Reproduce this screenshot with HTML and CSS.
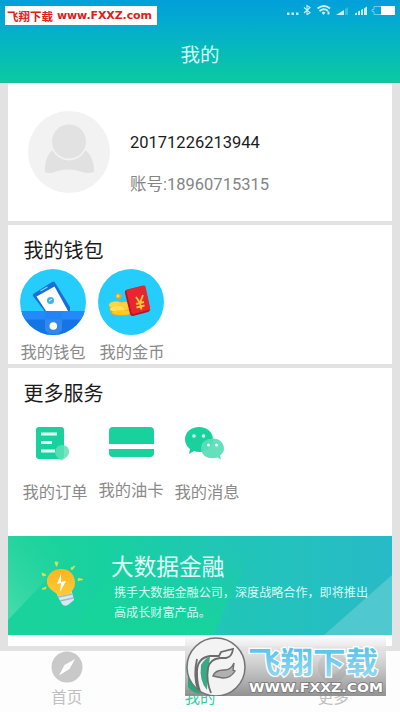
FILE: index.html
```html
<!DOCTYPE html>
<html lang="zh-CN">
<head>
<meta charset="utf-8">
<meta name="viewport" content="width=device-width, initial-scale=1">
<title>我的</title>
<link rel="stylesheet" href="styles.css">
</head>
<body>
<div class="app">
  <header class="header">
    <div class="statusbar">
      <svg width="112" height="14" viewBox="0 0 112 14" fill="#c8edf8">
        <path d="M2 11.500h2.500v2.500H2zM6.500 11.500h2.500v2.500h-2.500zM11 11.500h2.500v2.500H11z"/>
        <path d="M19 6.500l6 5.200-3 2V4.500l3 2-6 5.500" fill="none" stroke="#c8edf8" stroke-width="1.100"/>
        <path d="M32.500 7.500q6.500-5 12.500 0M34.500 10q4.500-3.500 8.500 0" fill="none" stroke="#c8edf8" stroke-width="1.800"/>
        <path d="M36.500 11.500q2-1.500 4 0l-2 2.500zM42.500 10.500h2v3h-2z"/>
        <path d="M51 14l8-5v5z"/><path d="M60 8l3-2v8h-3z" opacity=".3"/>
        <path d="M70 14v-1.500l2-1v2.500zM73 14v-3.500l2-1v4.500zM76 14v-5l2-1.200V14zM79 14V7.500l3-2V14z"/>
        <path d="M87 8.500h2V5.500h8v8h-8v-3h-2z" fill="none" stroke="#8bd4ee" stroke-width=".8"/>
        <path d="M96 5h14v9H96z" fill="#fff"/>
      </svg>
    </div>
    <h1 class="title">我的</h1>
    <div class="badge"><span class="badge-cn">飞翔下载</span><span class="badge-url">www.FXXZ.com</span></div>
  </header>

  <main class="content">
    <section class="card profile">
      <svg class="avatar" width="82" height="82" viewBox="0 0 82 82">
        <circle cx="41" cy="41" r="41" fill="#f2f2f2"/>
        <path d="M25 39C19 43 16.500 52 17 61q6 2 11-.5 13-4 26 .5 6 2 12 0c.5-9-3-18-9-22z" fill="#e1e1e1"/>
        <circle cx="41" cy="31" r="18.500" fill="#f2f2f2"/>
        <circle cx="41" cy="30.500" r="17" fill="#e2e2e2"/>
      </svg>
      <div class="identity">
        <div class="name">20171226213944</div>
        <div class="account">账号:18960715315</div>
      </div>
    </section>

    <section class="card wallet">
      <h2>我的钱包</h2>
      <div class="items">
        <div class="item">
          <svg width="66" height="66" viewBox="0 0 66 66">
            <clipPath id="disc"><circle cx="33" cy="33" r="33"/></clipPath>
            <g clip-path="url(#disc)">
              <path d="M0 0h66v66H0z" fill="#25cdfd"/>
              <path d="M14 24.500L32 13q2-1 3 .5L50 38v6H26L13 27q-1-1.500 1-2.500z" fill="#176fd8"/>
              <path d="M16.500 27.500L34.500 17.500 48 42H26z" fill="#fff"/>
              <path d="M20.500 22l7-4" stroke="#8dcaff" stroke-width="1.300"/>
              <circle cx="30.500" cy="31.500" r="3.500" fill="#35b9e2"/><path d="M29 32l3-2" stroke="#fff"/>
              <path d="M0 42h66v24H0z" fill="#1675e5"/><path d="M0 42h66v8.500H0z" fill="#2489fb"/>
              <path d="M25 42h17v17q0 6-8.500 6T25 59z" fill="#3289ed"/>
              <path d="M25 42h17v8.500H25z" fill="#2384f5"/>
              <circle cx="33.300" cy="57" r="3.800" fill="#fff"/>
            </g>
          </svg>
          <span>我的钱包</span>
        </div>
        <div class="item coin">
          <svg width="66" height="66" viewBox="0 0 66 66">
            <circle cx="33" cy="33" r="33" fill="#25cdfd"/>
            <path d="M11 38c0-8 10-6 13-5 5-2 12-1 12 3l-1 6q-3 5-11 5c-7 0-11-1-12-5z" fill="#e9a51a"/>
            <ellipse cx="18" cy="36" rx="7" ry="3.500" fill="#ffd640"/>
            <ellipse cx="27" cy="37" rx="8" ry="4" fill="#ffd13a"/>
            <ellipse cx="19" cy="40" rx="7" ry="3" fill="#ffe45a"/>
            <ellipse cx="24" cy="43.500" rx="10" ry="2.500" fill="#ffc928"/>
            <circle cx="20.500" cy="27" r="3" fill="#dba73b"/><circle cx="20" cy="27" r="1.500" fill="#ffd85c"/>
            <path d="M28 21l16-4q2-.5 3 1l5 22q.5 2-2 3l-15 4q-2 .5-3-2l-5-21q-.5-2 1-3z" fill="#b51622"/>
            <path d="M29.500 20.500L45 16.500q2-.5 2.500 1l4.500 21q.5 2-1.500 2.500L36 45q-2 .5-2.500-1.500l-5-20.500q-.5-2 1-2.500z" fill="#e8262f"/>
            <path d="M38 28l4 6 3-8M42 34l1.500 6.500M38 35l8-2M38.500 38.500l8-2" fill="none" stroke="#ffcc32" stroke-width="1.900"/>
          </svg>
          <span>我的金币</span>
        </div>
      </div>
    </section>

    <section class="card services">
      <h2>更多服务</h2>
      <div class="service-list">
        <div class="service order">
          <svg width="34" height="34" viewBox="0 0 34 34">
            <rect width="28" height="32" rx="3" fill="#19d19d"/>
            <path d="M5 7h16M5 15.500h11M5 24h14" stroke="#e6fff7" stroke-width="3"/>
            <path d="M26 18c5 0 8 4 7 8q-1 4-7.500 7.500Q19 30 19 25q1-7 7-7z" fill="#5ee0b9" opacity=".85"/>
          </svg>
          <span>我的订单</span>
        </div>
        <div class="service oil">
          <svg width="45" height="30" viewBox="0 0 45 30" fill="#19d19d">
            <path d="M0 17V4q0-4 4-4h37q4 0 4 4v13zM0 22h45v4q0 4-4 4H4q-4 0-4-4z"/>
          </svg>
          <span>我的油卡</span>
        </div>
        <div class="service message">
          <svg width="39" height="33" viewBox="0 0 39 33">
            <path d="M14 0c8 0 14 5 14 12.500S22 25 14 25q-3 0-5-1l-5 3 1-5Q0 18 0 12.500C0 5 6 0 14 0z" fill="#19d19d"/>
            <path d="M28 11.500c6 0 11 4 11 10q0 4-4 7l1 4-4-2q-2 .8-5 .8c-6 0-11-4-11-10s5-9.800 12-9.800z" fill="#58dfb7" opacity=".93"/>
            <circle cx="9" cy="9" r="1.800" fill="#d9fff4"/><circle cx="18.500" cy="9" r="1.800" fill="#d9fff4"/>
            <circle cx="23.500" cy="18" r="1.500" fill="#efffff"/><circle cx="31.500" cy="18" r="1.500" fill="#efffff"/>
          </svg>
          <span>我的消息</span>
        </div>
      </div>
      <div class="banner">
        <svg class="facets" width="384" height="99" viewBox="0 0 384 99">
          <defs>
            <linearGradient id="base" x2="1"><stop offset=".1" stop-color="#19d29c"/><stop offset=".25" stop-color="#18d1a0"/><stop offset=".55" stop-color="#20c6b6"/><stop offset="1" stop-color="#28bac8"/></linearGradient>
            <linearGradient id="wedge" x1=".6" y1=".1" x2=".5" y2="1"><stop stop-color="#16d49a" stop-opacity="0"/><stop offset="1" stop-color="#16d49a"/></linearGradient>
            <linearGradient id="light" gradientUnits="userSpaceOnUse" x1="0" y1="70" x2="70" y2="10"><stop stop-color="#42dba9"/><stop offset="1" stop-color="#22d29e" stop-opacity="0"/></linearGradient>
          </defs>
          <path d="M0 0h384v99H0z" fill="url(#base)"/>
          <path d="M60 99L130 0h122L205 99z" fill="url(#wedge)"/>
          <path d="M0 0h80L0 84z" fill="url(#light)"/>
          <path d="M384 39v60h-68z" fill="#4fc8cf"/>
        </svg>
        <svg class="bulb" width="45" height="46" viewBox="0 0 45 46">
          <defs><linearGradient id="glow" x2="0" y2="1"><stop stop-color="#ffb51e"/><stop offset="1" stop-color="#ffca36"/></linearGradient></defs>
          <path d="M15 1l3 .3-1.500 4zM35 5l-3 4-1-2zM2 12l4 2-3 1zM43 18.500l-5 1 .5-2zM2 28l4-2-.5 2z" fill="#d6e34b" stroke="#d6e34b"/>
          <path d="M16 29l15-1 3 11-6 5q-4 2-6-1l-4-7z" fill="#d9e8f0"/>
          <path d="M18 36l15-3M20 40l13-3" stroke="#9dbccb" stroke-width="1.300"/>
          <path d="M21 8c9 0 14 6 14 14 0 7-5 8-4 11l-13 2c-1-4-10-6-11-13-1-8 6-14 14-14z" fill="url(#glow)"/>
          <path d="M21 13l-4 10 4-1-1 9 6-11-5 1z" fill="#fff"/>
        </svg>
        <div class="banner-text">
          <h3>大数据金融</h3>
          <p>携手大数据金融公司，深度战略合作，即将推出<br>高成长财富产品。</p>
        </div>
      </div>
    </section>
  </main>

  <nav class="tabs">
    <a class="tab">
      <svg width="32" height="32" viewBox="0 0 32 32"><circle cx="16" cy="16" r="15.500" fill="#c9c9c9"/><path d="M24 8l-5.500 10L8 24.500 13.500 14z" fill="#fff"/></svg>
      <span>首页</span>
    </a>
    <a class="tab active">
      <svg width="32" height="32" viewBox="0 0 32 32"><circle cx="16" cy="16" r="15" fill="#19d19d"/></svg>
      <span>我的</span>
    </a>
    <a class="tab">
      <svg width="32" height="32" viewBox="0 0 32 32"><circle cx="16" cy="16" r="15" fill="#b0b0b0"/><circle cx="16" cy="16" r="7" fill="#fff"/></svg>
      <span>更多</span>
    </a>
  </nav>

  <div class="watermark">
    <svg width="202" height="61" viewBox="0 0 202 61">
      <defs>
        <linearGradient id="plate" x2="0" y2="1"><stop stop-color="#fff" stop-opacity=".9"/><stop offset=".1" stop-color="#f0f0f0" stop-opacity=".85"/><stop offset=".5" stop-color="#c4c4c4" stop-opacity=".85"/><stop offset="1" stop-color="#8a8a8a" stop-opacity=".93"/></linearGradient>
        <linearGradient id="sky" x2="0" y2="1"><stop stop-color="#43bce9"/><stop offset="1" stop-color="#9edcf2"/></linearGradient>
      </defs>
      <path d="M0 0h201v61H0z" fill="url(#plate)"/>
      <path d="M3 40q5 13 14 19-9 0-14-7z" fill="#25a87e"/>
      <circle cx="31" cy="32" r="29" fill="#f3f3f3" stroke="#747474" stroke-width="1.500"/>
      <path d="M16 30q5-8 9-8l-2 15-1 18q-8-9-6-25z" fill="#39aa87"/>
      <path d="M12 24q-4 17 1 31M26 58q-5-12-3-25 2-9 12-10h6q6-1 7-9l-12 3-2 4h-9q-13 2-13 16 0 12 3 19" fill="none" stroke="#6c6c6c" stroke-width="1.800"/>
      <path d="M28 41q2-6 11-6 7 0 10-7l-1 7 2 1q-4 7-12 7-6-1-10-2z" fill="#b1b1b1" stroke="#707070" stroke-width="1.400"/>
      <g class="wm-text">
        <text class="wm-cn" x="63" y="38" textLength="130" lengthAdjust="spacingAndGlyphs">飞翔下载</text>
        <text class="wm-url" x="64" y="56.500" textLength="134" lengthAdjust="spacingAndGlyphs">WWW.FXXZ.COM</text>
      </g>
    </svg>
  </div>
</div>
</body>
</html>
```
FILE: styles.css
```css
* { box-sizing: border-box; }

body {
  margin: 0;
  font-family: Roboto, "Noto Sans CJK SC", sans-serif;
  background: #fdfdfd;
}

h1, h2, h3, p { margin: 0; font-weight: 400; }
svg { display: block; flex: none; }
span { white-space: nowrap; }

.app {
  position: relative;
  width: 400px;
  height: 712px;
  overflow: hidden;
  display: flex;
  flex-direction: column;
}

.header {
  position: relative;
  height: 83px;
  background: linear-gradient(#029fdb, #05b4c4 48%, #0bcaa2);
  border-bottom: 1px solid #20ba9d;
}

.statusbar {
  display: flex;
  justify-content: flex-end;
  height: 20px;
  padding: 1px 3px 0 0;
}

.title {
  text-align: center;
  font-size: 19.5px;
  line-height: 30px;
  padding-top: 21px;
  color: #d5fbf7;
}

.badge {
  position: absolute;
  left: 5px;
  top: 6px;
  width: 152px;
  height: 19px;
  padding-left: 2px;
  display: flex;
  align-items: center;
  background: #fff;
  color: #dc2118;
  font-weight: 700;
  white-space: nowrap;
}

.badge-cn { width: 50px; font-size: 11.5px; }
.badge-url { font: 700 11px "DejaVu Sans", sans-serif; letter-spacing: -.1px; }

.content {
  height: 568px;
  padding: 0 8px;
  background: #e2e2e2;
  display: flex;
  flex-direction: column;
  gap: 4px;
}

.card { background: #fff; }

.profile {
  height: 138px;
  display: flex;
  padding: 28px 0 0 20px;
}

.identity { padding: 20px 0 0 20px; }

.name {
  font-size: 16.5px;
  line-height: 24px;
  color: #1c1c1c;
}

.account {
  margin-top: 18px;
  font-size: 16.5px;
  line-height: 24px;
  color: #858585;
}

h2 {
  font-size: 20px;
  line-height: 30px;
  color: #1b1b1b;
  padding-left: 15.5px;
}

.wallet { height: 139px; padding-top: 11px; }

.items {
  display: flex;
  gap: 12px;
  padding: 3px 0 0 12px;
}

.item {
  width: 66px;
  display: flex;
  flex-direction: column;
  align-items: center;
}

.item span, .service span {
  font-size: 16.3px;
  line-height: 24px;
  color: #8a8a8a;
}

.item span { margin-top: 6px; }
.coin span { margin-left: 2px; }

.services { height: 278px; padding-top: 11px; }

.service-list {
  display: flex;
  gap: 10px;
  height: 127px;
  padding: 18px 0 0 14px;
}

.service {
  width: 66px;
  display: flex;
  flex-direction: column;
  align-items: center;
}

.order svg { margin-left: -4px; }
.order span { margin-top: 20px; }
.oil span { margin-top: 22px; }
.message svg { margin-left: -5px; }
.message span { margin-top: 21px; }

.banner {
  position: relative;
  height: 99px;
  display: flex;
}

.facets {
  position: absolute;
  left: 0;
  top: 0;
}

.bulb { position: relative; margin: 25px 0 0 32px; }
.banner-text { position: relative; padding: 16px 0 0 26px; }

h3 {
  font-size: 22.7px;
  line-height: 31px;
  color: #e1fff9;
}

.banner-text p {
  padding-left: 3px;
  font-size: 12.1px;
  line-height: 20px;
  color: #d5fbf2;
  white-space: nowrap;
}

.tabs {
  height: 61px;
  display: grid;
  grid-template-columns: repeat(3, 1fr);
  background: #fdfdfd;
}

.tab {
  display: flex;
  flex-direction: column;
  align-items: center;
  color: #c0c0c0;
}

.tab span {
  margin-top: 3px;
  font-size: 15.5px;
  line-height: 24px;
}

.active { color: #31cda2; }

.watermark {
  position: absolute;
  left: 185px;
  top: 635px;
}

.wm-cn {
  font: 700 30px "Noto Sans CJK SC", sans-serif;
  fill: url(#sky);
  stroke: #fff;
  stroke-width: 2.5px;
  paint-order: stroke;
}

.wm-url {
  font: 700 12.5px "DejaVu Sans", sans-serif;
  fill: #fff;
  stroke: #777;
  stroke-width: 1.5px;
  paint-order: stroke;
}
```
